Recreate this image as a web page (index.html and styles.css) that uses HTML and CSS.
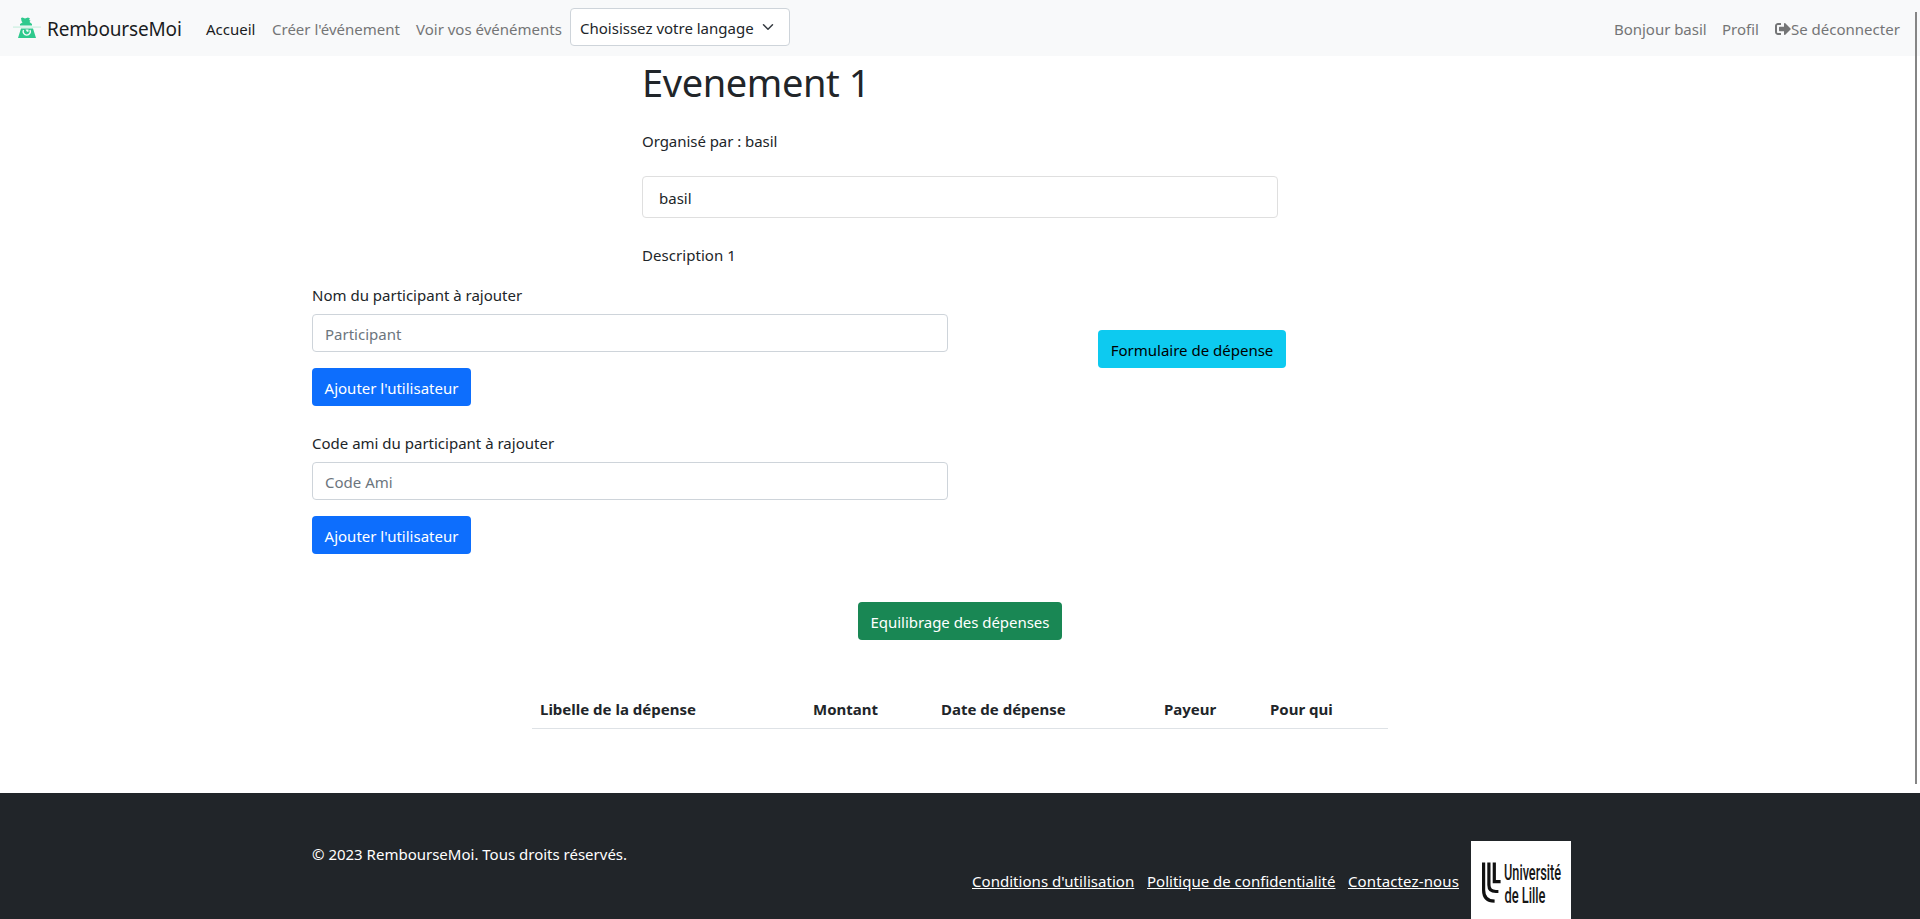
FILE: index.html
```html
<!DOCTYPE html>
<html lang="fr">
<head>
<meta charset="utf-8">
<title>RembourseMoi</title>
<link rel="stylesheet" href="styles.css">
</head>
<body>
<nav class="navbar">
  <a class="brand" href="#">
    <svg class="brand-icon" viewBox="0 0 28 22" width="28" height="22">
      <path fill="#2fc98d" d="M8 1l1.500-.5 2.500 1 3-1 2 1-1 1.500 1.500.5-1 1.500L19 7v1.500H7V7l2.500-1.500L8.500 4zM8 11.500h12l3 9.500H5z"/>
      <path fill="#c9efdf" d="M0 9.500h28v1.200H0z"/>
      <path fill="none" stroke="#f8f9fa" stroke-width="1.400" d="M10.500 13a3.600 3.600 0 1 0 6.500 0"/>
      <path fill="#f8f9fa" d="M12.500 12.500h3v2.200h-1.500z"/>
    </svg>
    <span class="brand-name">RembourseMoi</span>
  </a>
  <div class="nav-links">
    <a class="nav-link active" href="#">Accueil</a>
    <a class="nav-link create" href="#">Créer l'événement</a>
    <a class="nav-link list" href="#">Voir vos événéments</a>
  </div>
  <div class="select"><span>Choisissez votre langage</span>
    <svg viewBox="0 0 16 16" width="12" height="12"><path fill="none" stroke="#343a40" stroke-linecap="round" stroke-linejoin="round" stroke-width="2" d="m2 5 6 6 6-6"/></svg>
  </div>
  <div class="nav-user">
    <a class="nav-link hello" href="#">Bonjour basil</a>
    <a class="nav-link profile" href="#">Profil</a>
    <a class="nav-link logout" href="#"><svg viewBox="0 0 512 512" width="16" height="16"><path fill="currentColor" d="M497 273L329 441c-15 15-41 4.500-41-17v-96H152c-13.300 0-24-10.700-24-24v-96c0-13.300 10.700-24 24-24h136V88c0-21.400 25.900-32 41-17l168 168c9.300 9.400 9.300 24.600 0 34zM192 436v-40c0-6.600-5.400-12-12-12H96c-17.700 0-32-14.300-32-32V160c0-17.700 14.300-32 32-32h84c6.600 0 12-5.400 12-12V76c0-6.600-5.400-12-12-12H96c-53 0-96 43-96 96v192c0 53 43 96 96 96h84c6.600 0 12-5.400 12-12z"/></svg><span>Se déconnecter</span></a>
  </div>
</nav>
<div class="scroll-thumb"></div>
<main>
  <section class="event">
    <h1>Evenement 1</h1>
    <p class="organizer">Organisé par : basil</p>
    <ul class="participants"><li>basil</li></ul>
    <p class="description">Description 1</p>
  </section>
  <section class="actions">
    <div class="forms">
      <form class="add-form">
        <label for="name">Nom du participant à rajouter</label>
        <input id="name" type="text" placeholder="Participant">
        <button type="button" class="btn primary">Ajouter l'utilisateur</button>
      </form>
      <form class="add-form">
        <label for="code">Code ami du participant à rajouter</label>
        <input id="code" type="text" placeholder="Code Ami">
        <button type="button" class="btn primary">Ajouter l'utilisateur</button>
      </form>
    </div>
    <a class="btn info" href="#">Formulaire de dépense</a>
  </section>
  <a class="btn success" href="#">Equilibrage des dépenses</a>
  <table class="expenses">
    <thead><tr><th class="c-label">Libelle de la dépense</th><th class="c-amount">Montant</th><th class="c-date">Date de dépense</th><th class="c-payer">Payeur</th><th class="c-for">Pour qui</th></tr></thead>
  </table>
</main>
<footer class="footer">
  <div class="footer-inner">
    <p class="copyright">© 2023 RembourseMoi. Tous droits réservés.</p>
    <div class="footer-links">
      <a class="terms" href="#">Conditions d'utilisation</a>
      <a class="privacy" href="#">Politique de confidentialité</a>
      <a class="contact" href="#">Contactez-nous</a>
    </div>
    <div class="univ">
      <svg viewBox="0 0 100 100" width="100" height="100">
        <g fill="none" stroke="#111" stroke-width="3.200">
          <path d="M12.600 21.500V49q0 11 11 11.200"/>
          <path d="M17.900 21.500V44q0 6.500 7 6.500h2.500"/>
          <path d="M23.300 21.500V40.700h6.300"/>
        </g>
        <g fill="#161616" class="univ-text">
          <text x="33" y="39" textLength="57" lengthAdjust="spacingAndGlyphs">Université</text>
          <text x="33.500" y="62" textLength="41" lengthAdjust="spacingAndGlyphs">de Lille</text>
        </g>
      </svg>
    </div>
  </div>
</footer>
</body>
</html>
```
FILE: styles.css
```css
* { box-sizing: border-box; }
html, body { height: 100%; overflow: hidden; }
body {
  margin: 0;
  font-family: "Noto Sans", "Open Sans", sans-serif;
  font-size: 15px;
  line-height: 24px;
  color: #212529;
  background: #fff;
  display: flex;
  flex-direction: column;
  white-space: nowrap;
}
a { color: inherit; text-decoration: none; }
h1, p, ul { margin: 0; padding: 0; }
.navbar { display: flex; align-items: center; height: 56px; flex: none; background: #f8f9fa; padding: 0 20px 0 13px; }
.brand { display: flex; align-items: center; width: 193px; color: #1a1c1e; font-size: 19px; letter-spacing: -0.15px; }
.brand-icon { margin-right: 6px; margin-bottom: 1px; }
.brand-name { padding-top: 2px; }
.nav-links, .nav-user { display: flex; padding-top: 1px; }
.nav-link { color: #747576; }
.nav-link.active { color: #1a1c1e; width: 66px; }
.create { width: 144px; }
.list { width: 154px; }
.select { width: 220px; height: 38px; margin-top: -2px; border: 1px solid #ced4da; border-radius: 4px; background: #fff; display: flex; align-items: center; justify-content: space-between; padding: 2px 15px 0 9px; }
.select svg { margin-top: -3px; }
.nav-user { margin-left: auto; }
.hello { width: 108px; letter-spacing: -0.03px; }
.profile { width: 53px; }
.logout { display: flex; align-items: center; width: 125px; }
.logout svg { flex: none; }
.scroll-thumb { position: absolute; left: 1915px; top: 12px; width: 2px; height: 772px; background: #858585; }
main { display: flex; flex-direction: column; height: 737px; flex: none; }
.event { width: 636px; margin-left: 642px; }
h1 { font-weight: 400; font-size: 38px; line-height: 48px; padding-top: 2px; letter-spacing: -0.4px; }
.organizer { margin-top: 23px; letter-spacing: -0.05px; }
.participants { list-style: none; margin-top: 23px; height: 42px; border: 1px solid #dfdfdf; border-radius: 4px; padding: 9px 16px; }
.description { margin-top: 25px; letter-spacing: 0.05px; }
.actions { display: flex; margin-left: 312px; margin-top: 16px; }
.forms { width: 636px; }
.add-form { height: 148px; display: flex; flex-direction: column; align-items: flex-start; }
label { height: 31px; }
input { width: 636px; height: 38px; border: 1px solid #ced4da; border-radius: 4px; padding: 1px 12px 0; font: inherit; color: #212529; }
input::placeholder { color: #6c757d; opacity: 1; }
.btn { display: flex; justify-content: center; height: 38px; padding: 8px 0 0; border: 0; border-radius: 4px; font: inherit; }
.primary { width: 159px; margin-top: 16px; background: #0d6efd; color: #fff; }
.info { width: 188px; margin: 47px 0 0 150px; background: #0dcaf0; color: #000; }
.success { width: 204px; margin: 23px 0 0 858px; background: #198754; color: #fff; flex: none; letter-spacing: -0.04px; }
.expenses { width: 856px; margin: 49px 0 0 532px; border-collapse: collapse; table-layout: fixed; }
.expenses th { text-align: left; font-weight: 700; padding: 8px 0 7px 8px; border-bottom: 1px solid #dee2e6; }
.c-label { width: 273px; }
.c-amount { width: 128px; }
.c-date { width: 223px; }
.c-payer { width: 106px; }
.footer { flex: 1; min-height: 0; background: #212529; color: #fff; padding: 48px 0 0 312px; overflow: hidden; }
.footer-inner { display: flex; align-items: flex-start; }
.copyright { width: 660px; padding-top: 1px; }
.footer-links { display: flex; padding-top: 28px; }
.footer-links a { text-decoration: underline; text-underline-offset: 1px; }
.terms { width: 175px; letter-spacing: 0.04px; }
.privacy { width: 201px; }
.contact { width: 123px; letter-spacing: 0.12px; }
.univ { width: 100px; height: 100px; background: #fff; }
.univ svg { display: block; overflow: visible; }
.univ-text { font-family: Roboto, sans-serif; font-size: 22px; font-weight: 500; }
```
